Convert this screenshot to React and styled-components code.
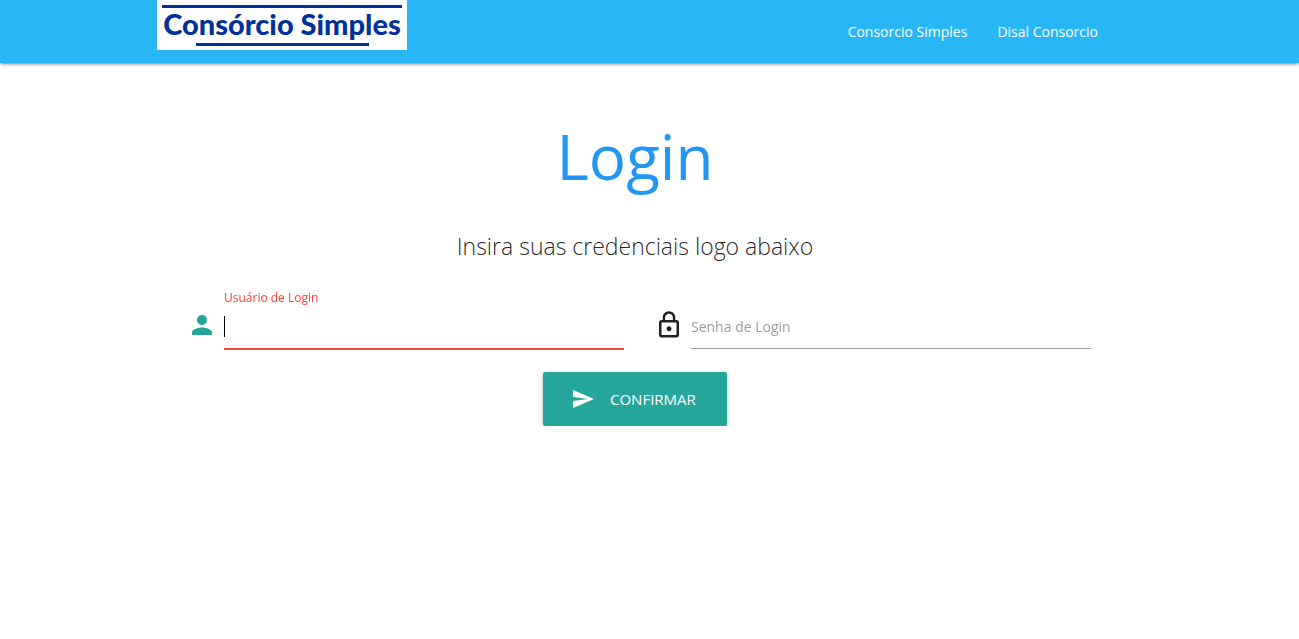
import React from "react";
import styled, { createGlobalStyle } from "styled-components";

const GlobalStyle = createGlobalStyle`
  *, *::before, *::after { box-sizing: border-box; }
  body {
    margin: 0;
    background: #fff;
    color: rgba(0, 0, 0, 0.87);
    font-family: "Segoe UI", "Open Sans", "Noto Sans", sans-serif;
    font-size: 15px;
    line-height: 24px;
  }
`;

const shadow = `0 2px 2px 0 rgba(0, 0, 0, 0.14), 0 3px 1px -2px rgba(0, 0, 0, 0.12), 0 1px 5px 0 rgba(0, 0, 0, 0.2)`;

const NavBar = styled.nav`
  background: #29b6f6;
  box-shadow: ${shadow};
  padding-right: 29px;
`;

const Container = styled.div`
  width: 100%;
  max-width: 956px;
  margin: 0 auto;
`;

const NavContent = styled(Container)`
  display: flex;
  justify-content: space-between;
  align-items: flex-start;
`;

const Logo = styled.a`
  display: flex;
  flex-direction: column;
  align-items: center;
  justify-content: space-between;
  width: 250px;
  height: 50px;
  padding: 5px 5px 4px;
  background: #fff;
  color: #003399;
  font-family: "Lato", sans-serif;
  font-size: 29px;
  font-weight: 900;
  line-height: 32px;
  text-decoration: none;
  white-space: nowrap;
`;

const LogoName = styled.span`
  height: 35px;
`;

const LogoBar = styled.span`
  flex: none;
  width: ${(p) => p.$width};
  height: 3px;
  background: #003399;
`;

const NavLinks = styled.ul`
  display: flex;
  margin: 0;
  padding: 0;
  list-style: none;
`;

const NavLink = styled.a`
  display: block;
  padding: 0 15px;
  color: #fff;
  font-size: 14px;
  line-height: 63px;
  text-decoration: none;
`;

const Main = styled.main`
  padding: 58px 29px 0 0;
`;

const Title = styled.h1`
  margin: 0;
  color: #2196f3;
  font-size: 62px;
  font-weight: 400;
  line-height: 70px;
  text-align: center;
`;

const Subtitle = styled.p`
  margin: 38px 0 0;
  font-size: 23px;
  font-weight: 300;
  line-height: 34px;
  text-align: center;
`;

const Form = styled.form`
  display: flex;
  flex-direction: column;
  align-items: center;
  gap: 23px;
  padding: 0 22px;
  margin-top: 29px;
`;

const Fields = styled.div`
  display: grid;
  grid-template-columns: 1fr 1fr;
  gap: 22px;
  width: 100%;
`;

const Field = styled.div`
  display: grid;
  grid-template-columns: 45px 1fr;
  grid-template-rows: 12px 45px;
  align-items: center;
`;

const Prefix = styled.svg`
  grid-area: 2 / 1;
  align-self: start;
  justify-self: center;
  width: 30px;
  height: 30px;
  margin-top: 6px;
  fill: ${(p) => p.$color};
`;

const Label = styled.label`
  grid-area: ${(p) => (p.$raised ? "1 / 2" : "2 / 2")};
  color: ${(p) => (p.$raised ? "#f44336" : "#9e9e9e")};
  font-size: ${(p) => (p.$raised ? "12px" : "14px")};
  line-height: 16px;
  pointer-events: none;
  z-index: 1;
`;

const Input = styled.input`
  grid-area: 2 / 2;
  width: 100%;
  height: 45px;
  padding: 0;
  border: 0;
  border-bottom: 1px solid ${(p) => (p.$invalid ? "#f44336" : "#9e9e9e")};
  box-shadow: ${(p) => (p.$invalid ? "0 1px 0 0 #f44336" : "none")};
  outline: none;
  background: transparent;
  color: #000;
  caret-color: transparent;
  font: inherit;
`;

const Caret = styled.span`
  grid-area: 2 / 2;
  width: 1px;
  height: 21px;
  background: #000;
  pointer-events: none;
`;

const Submit = styled.button`
  display: flex;
  align-items: center;
  gap: 15px;
  min-width: 184px;
  height: 54px;
  padding: 0 28px;
  border: 0;
  border-radius: 2px;
  background: #26a69a;
  box-shadow: ${shadow};
  color: #fff;
  font: inherit;
  text-transform: uppercase;
  cursor: pointer;
`;

const SendIcon = styled.svg`
  width: 24px;
  height: 24px;
  fill: #fff;
`;

export default function App() {
  return (
    <>
      <GlobalStyle />
      <NavBar>
        <NavContent>
          <Logo href="#">
            <LogoBar $width="240px" />
            <LogoName>Consórcio Simples</LogoName>
            <LogoBar $width="173px" />
          </Logo>
          <NavLinks>
            <li><NavLink href="#">Consorcio Simples</NavLink></li>
            <li><NavLink href="#">Disal Consorcio</NavLink></li>
          </NavLinks>
        </NavContent>
      </NavBar>
      <Main>
        <Container>
          <Title>Login</Title>
          <Subtitle>Insira suas credenciais logo abaixo</Subtitle>
          <Form onSubmit={(e) => e.preventDefault()}>
            <Fields>
              <Field>
                <Prefix viewBox="0 0 24 24" $color="#26a69a" aria-hidden="true">
                  <path d="M12 12c2.21 0 4-1.79 4-4s-1.79-4-4-4-4 1.79-4 4 1.79 4 4 4zm0 2c-2.67 0-8 1.34-8 4v2h16v-2c0-2.66-5.33-4-8-4z" />
                </Prefix>
                <Label htmlFor="usuario" $raised>Usuário de Login</Label>
                <Input id="usuario" type="text" $invalid autoFocus />
                <Caret />
              </Field>
              <Field>
                <Prefix viewBox="0 0 24 24" $color="#212121" aria-hidden="true">
                  <path d="M12 17c1.1 0 2-.9 2-2s-.9-2-2-2-2 .9-2 2 .9 2 2 2zm6-9h-1V6c0-2.76-2.24-5-5-5S7 3.24 7 6v2H6c-1.1 0-2 .9-2 2v10c0 1.1.9 2 2 2h12c1.1 0 2-.9 2-2V10c0-1.1-.9-2-2-2zM8.9 6c0-1.71 1.39-3.1 3.1-3.1s3.1 1.39 3.1 3.1v2H8.9V6zM18 20H6V10h12v10z" />
                </Prefix>
                <Label htmlFor="senha">Senha de Login</Label>
                <Input id="senha" type="password" />
              </Field>
            </Fields>
            <Submit type="submit">
              <SendIcon viewBox="0 0 24 24" aria-hidden="true">
                <path d="M2.01 21L23 12 2.01 3 2 10l15 2-15 2z" />
              </SendIcon>
              Confirmar
            </Submit>
          </Form>
        </Container>
      </Main>
    </>
  );
}
